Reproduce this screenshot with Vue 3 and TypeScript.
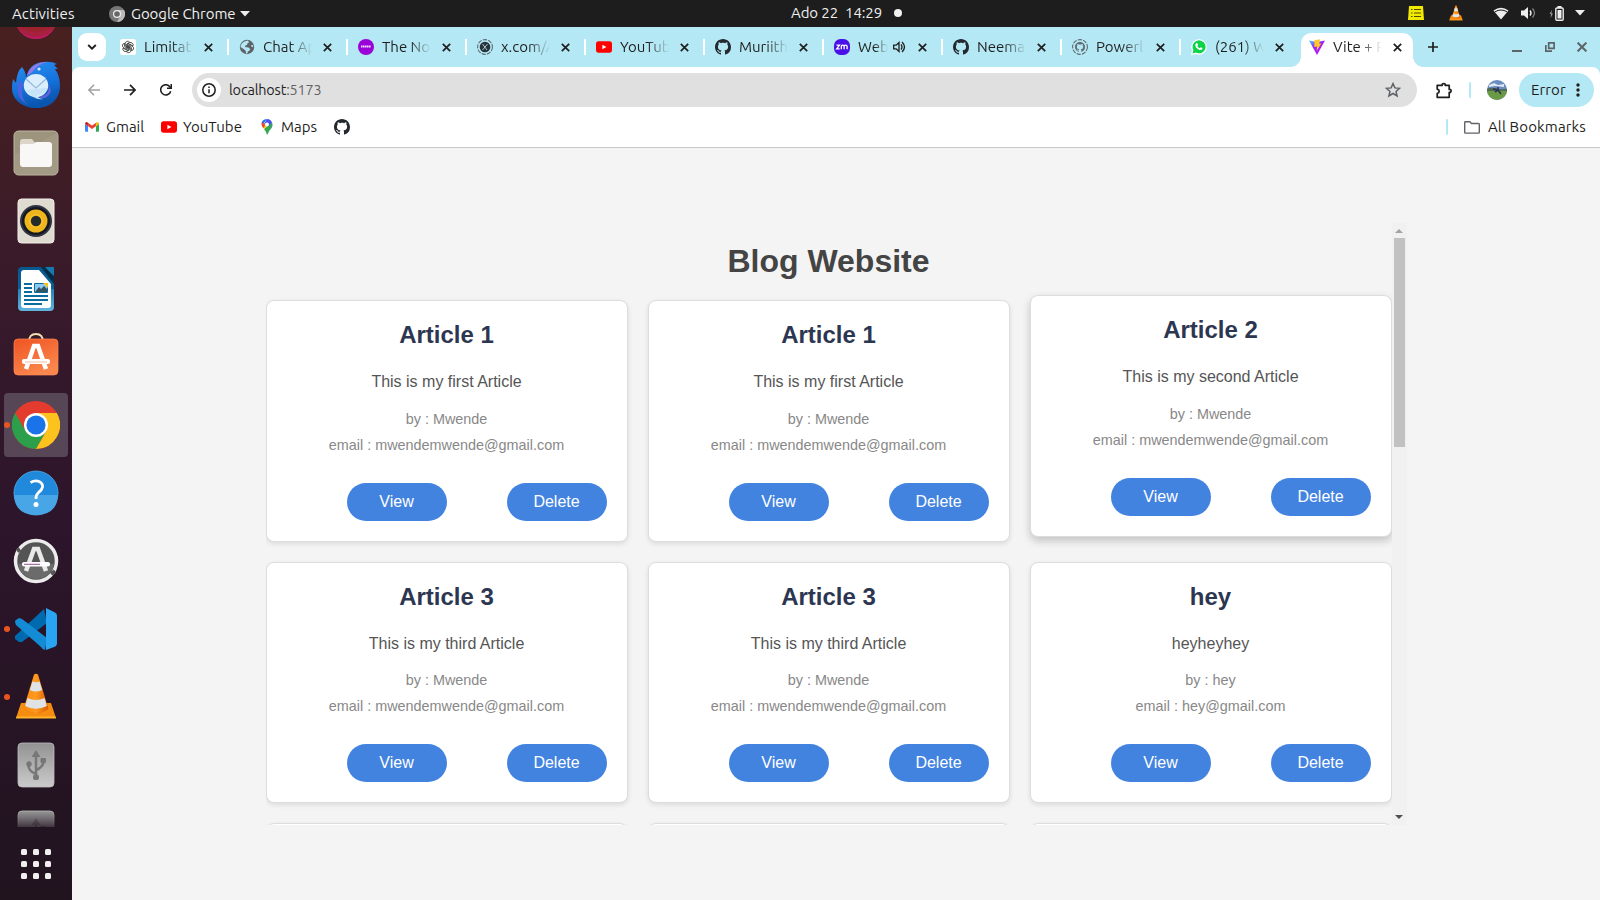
<script setup lang="ts">
interface Tab { title: string; icon: string; audio?: boolean }
interface Article { title: string; content: string; author: string; email: string; hovered?: boolean }
interface DockItem { icon: string; running?: boolean; active?: boolean; fading?: boolean }

const github = '<path fill="#24292f" d="M8 0C3.58 0 0 3.58 0 8c0 3.54 2.29 6.53 5.47 7.59.4.07.55-.17.55-.38 0-.19-.01-.82-.01-1.49-2.01.37-2.53-.49-2.69-.94-.09-.23-.48-.94-.82-1.13-.28-.15-.68-.52-.01-.53.63-.01 1.08.58 1.23.82.72 1.21 1.87.87 2.33.66.07-.52.28-.87.51-1.07-1.78-.2-3.64-.89-3.64-3.95 0-.87.31-1.59.82-2.15-.08-.2-.36-1.02.08-2.12 0 0 .67-.21 2.2.82.64-.18 1.32-.27 2-.27s1.36.09 2 .27c1.53-1.04 2.2-.82 2.2-.82.44 1.1.16 1.92.08 2.12.51.56.82 1.27.82 2.15 0 3.07-1.87 3.75-3.65 3.95.29.25.54.73.54 1.48 0 1.07-.01 1.93-.01 2.2 0 .21.15.46.55.38A8.01 8.01 0 0 0 16 8c0-4.42-3.58-8-8-8z"/>'
const petal = 'M8 8.3 5.2 6.7V4.6a2.4 2.4 0 0 1 4.4-1.3L6.6 5v3'
const petals = [0, 60, 120, 180, 240, 300].map(a => `<path d="${petal}" transform="rotate(${a} 8 8)"/>`).join('')
const dashedRing = '<circle cx="8" cy="8" r="7.4" fill="none" stroke="#5f6b70" stroke-width="1.1" stroke-dasharray="4.2 1.2"/>'

const small: Record<string, string> = {
  github,
  chatgpt: `<rect width="16" height="16" rx="2.5" fill="#fff"/><g fill="none" stroke="#333" stroke-width=".8">${petals}</g>`,
  globe: '<circle cx="8" cy="8" r="7.2" fill="#5f6368"/><path fill="#b4e8f4" d="M6 2.2 9 1.5l1 1.7-1.8 1.5-.2 1.4-1.6.5-.4 1.5 3.5.3 1.8 1.8-1 1.6-1.6.6-.2 2H7l-.3-2.7-1.8-1.5L1.5 8c.1-2.7 2-4.900 4.500-5.800zM12 6l2 .2.200 2-1.600-.5z"/>',
  nopurple: '<circle cx="8" cy="8" r="8" fill="#9a00d8"/><path d="M3 7.500h10" stroke="#f1d9fb" stroke-width="2" stroke-dasharray="1.600 .4"/>',
  xcom: `${dashedRing}<circle cx="8" cy="8" r="5.300" fill="#24343c"/><path d="M5.500 5l4.500 6M10.500 5 5.500 11" stroke="#dce9ed" stroke-width=".8" fill="none"/>`,
  youtube: '<rect y="2.300" width="16" height="11.400" rx="2.600" fill="#f00"/><path d="M6.400 5.700v4.600L10.400 8z" fill="#fff"/>',
  zoom: '<rect width="16" height="16" rx="6.500" fill="#4a10e8"/><g fill="none" stroke="#fff" stroke-width="1.300"><path d="M2.500 6.200h3L2.700 9.800h3M7.300 10.300V7.600q0-1.500 1.400-1.500t1.400 1.500v2.700V7.600q0-1.500 1.500-1.500t1.500 1.500v2.700"/></g>',
  powerl: `${dashedRing}<g transform="translate(3 3) scale(.625)">${github.replace('#24292f', '#5f6b70')}</g>`,
  whatsapp: '<path fill="#fff" d="M0 16 1 11A7.700 7.700 0 1 1 5 15z"/><path fill="#0bd449" d="m1.500 14.500.9-3.500a6.500 6.500 0 1 1 2.500 2.500z"/><path fill="#fff" d="M5.200 4.300q1-.6 1.400.4l.5 1.200-.8 1q.8 1.600 2.500 2.300l1-1 1.800.9q0 1.800-2 2C7 11 4 8.200 4.300 5.700z"/>',
  vite: '<defs><linearGradient id="vp" x1="0" y1="0" x2=".7" y2="1"><stop stop-color="#41d1ff"/><stop offset=".45" stop-color="#9b20ff"/><stop offset="1" stop-color="#bd13ff"/></linearGradient></defs><path fill="url(#vp)" d="M0 1.500 8 3l8-1.500L8 16z"/><path fill="#ffcb1f" d="m5.500 1.300 5.500-1-.7 4.500 2-.4L7.600 12l.5-4.500-2.800.6z"/>',
  gmail: '<path fill="#4285f4" d="M1 13.500h2.500V7L0 4.400v8q0 1.100 1 1.100z"/><path fill="#34a853" d="M12.500 13.500H15q1 0 1-1.100v-8L12.500 7z"/><path fill="#ea4335" d="M3.500 7V3l4.500 3.400L12.500 3v4L8 10.400z"/><path fill="#c5221f" d="M0 4.400Q0 2 2 2.200L3.500 3v4z"/><path fill="#fbbc04" d="M12.500 7V3L14 2.200q2-.2 2 2.200z"/>',
  maps: '<path fill="#34a853" d="M8 16q-.8-3.500-3-6L13 3.500c2 4.500-2 6.500-3.500 10z"/><path fill="#fbbc04" d="M5 10 3 7l3-3.500 4 2z"/><path fill="#1a73e8" d="M2.600 3.500Q4 0 8 0L4.300 4.700z"/><path fill="#4b50f0" d="M8 0q3.800.2 5 3.500L9 8l-1-3.500L5 5z"/><path fill="#ea4335" d="M3 7q-1-1.800-.2-4L6.300 5.800 4.300 9z"/><circle cx="8" cy="5.500" r="2" fill="#fff"/>',
}

const chromeWheel = '<circle cx="24" cy="24" r="24" fill="#e33b2e"/><path fill="#2c9f4a" d="M3.200 12A24 24 0 0 0 24 48l10.400-18-10.400 6-10.400-6z"/><path fill="#fcc31e" d="M24 48A24 24 0 0 0 44.800 12H24l10.400 18z"/><circle cx="24" cy="24" r="12" fill="#fff"/><circle cx="24" cy="24" r="9.600" fill="#1a73e8"/>'
const usb = '<defs><linearGradient id="us" x2="0" y2="1"><stop stop-color="#929292"/><stop offset="1" stop-color="#cbcbcb"/></linearGradient></defs><rect x="6" y="2" width="36" height="44" rx="4" fill="url(#us)" stroke="#bdbdbd" stroke-width=".8"/><g stroke="#777" stroke-width="2.500" fill="none"><path d="M24 15v22M24 33q-8-3-7.500-9.500M24 29q8-3 7.500-10"/></g><path d="m24 9-4.500 7h9z" fill="#777"/><circle cx="17" cy="23" r="2.700" fill="#777"/><rect x="28.500" y="17" width="5.500" height="5" rx="1" fill="#777"/><rect x="21" y="33.500" width="6" height="5.500" rx="2" fill="#777"/>'
const cone = '<defs><linearGradient id="co"><stop stop-color="#f98a12"/><stop offset=".5" stop-color="#ff9a20"/><stop offset="1" stop-color="#d75c00"/></linearGradient></defs><path fill="#f78d10" d="M9 30h30l5 15H4z"/><path fill="#ffb62c" d="M4.500 43.500h39l.5 2H4z"/><path fill="#c75704" d="M12 36q12 8 24 0l-1-5H13z"/><path fill="url(#co)" d="M22 1.500q2-1.500 4 0L36.500 36q-12.500 8-25 0z"/><path fill="#dfe3e5" d="M20.500 8.500q3.500 1.500 7 0l2.700 8.500q-6.200 3-12.400 0zM15.500 25q8.500 4 17 0l2.400 8q-10.900 5.500-21.800 0z"/>'

const large: Record<string, string> = {
  terminalEdge: '<circle cx="24" cy="23" r="22" fill="#9c2230"/><path d="M4 32q20 14 40 0-6 14-20 14T4 32z" fill="#a82040"/><path d="M6 36q18 16 36 0-7 10-18 10T6 36z" fill="#bb1a63"/>',
  thunderbird: '<defs><linearGradient id="tb" x2=".3" y2="1"><stop stop-color="#2a91f1"/><stop offset=".6" stop-color="#1672dc"/><stop offset="1" stop-color="#0953a9"/></linearGradient></defs><path fill="url(#tb)" d="M1 18 4 22Q5 10 10 6q4 5 4 11Q17 2 31 1q9-1 14 2l-3 1 4 4h-3q5 7 5 17c0 13-11 22-24 22S0 39 0 27q0-5 1-9z"/><path fill="#9878e8" d="M15 14Q20 1 36 1 26 3 21 10q-2 3-6 4z"/><path fill="#4f62dd" d="M7 20q-5 17 9 24-9-8-5-22z"/><path fill="#5f63dc" d="M35 22q6 11-8 14 5 3 9-1 6-5-1-13z"/><path fill="#0b5dbd" d="M4 36q19 13 44-10-1 21-24 21Q10 47 4 36z" opacity=".35"/><ellipse cx="24" cy="24.500" rx="12.200" ry="11.500" fill="#dbeefc"/><path fill="#c7e3f9" d="M14 29q9 11 17 9-6-1-6-4 8 0 10-7z"/><path d="m14 18 10 9 10-9" fill="none" stroke="#96b9dc" stroke-width="1.300"/><circle cx="27" cy="8" r="1.600" fill="#cfe7fc"/>',
  files: '<rect x="2" y="2" width="44" height="44" rx="4.500" fill="#9d947e" stroke="#beb7a5" stroke-width="1"/><path d="M3 26 45 4v38q0 3-3 3H6q-3 0-3-3z" fill="#a79f8b" opacity=".6"/><path fill="#ddd6c8" d="M8 13q0-3 3-3h9l3 4v5H8z"/><path fill="#f9f8f6" d="M8 17q0-2 3-2h10l3-2h13q3 0 3 3v19q0 3-3 3H11q-3 0-3-3z"/>',
  speaker: '<rect x="6" y="2" width="36" height="44" rx="3.500" fill="#dfdbd0" stroke="#f2eee6"/><circle cx="24" cy="24" r="16" fill="#303543"/><circle cx="24" cy="24" r="14" fill="#15191f"/><circle cx="24" cy="24" r="11.500" fill="#eeb51d"/><circle cx="24" cy="24" r="7" fill="#ffc82d" opacity=".6"/><circle cx="24" cy="24" r="5.200" fill="#252a2d"/>',
  writer: '<defs><linearGradient id="wr" x2="0" y2="1"><stop stop-color="#07588e"/><stop offset=".49" stop-color="#086295"/><stop offset=".5" stop-color="#2084b8"/><stop offset="1" stop-color="#62b4dd"/></linearGradient></defs><path fill="url(#wr)" d="M10 2h20l12 11v29q0 4-4 4H10q-4 0-4-4V6q0-4 4-4z"/><path fill="#fff" d="M12 5h15l12 14v21q0 3-3 3H12q-3 0-3-3V8q0-3 3-3z"/><path fill="#1679ae" d="M32 2h10v9z"/><path fill="#002d48" d="M29 2h4l9 10v7z"/><path stroke="#0a6b9f" stroke-width="2" d="M12 19h8M12 23h8M12 27h8M12 31h24M12 35h24M12 39h18"/><path fill="#8bcaf5" stroke="#0a6b9f" d="M22.500 18.500h13v9h-13z"/><path fill="#36515f" d="m23 27 4-5 2 2 3-3 3 3v3z"/><path fill="#f0c21b" d="m31 18 5 5v-5z"/>',
  software: '<defs><linearGradient id="sw" x2=".5" y2="1"><stop stop-color="#ee5322"/><stop offset="1" stop-color="#fa874d"/></linearGradient></defs><path d="M17 9q0-8 7-8t7 8" fill="none" stroke="#efe0b4" stroke-width="1.800"/><rect x="2" y="6" width="44" height="36" rx="4" fill="url(#sw)" stroke="#ff8a57" stroke-width=".7"/><path d="m14 36 8-23h4l8 23" fill="none" stroke="#fff" stroke-width="4.500"/><rect x="10" y="26" width="28" height="5" rx="2" fill="#fff"/><path d="M13 29h22" stroke="#f2a178" stroke-width=".7"/>',
  chrome: chromeWheel,
  help: '<circle cx="24" cy="24" r="22" fill="#2089dc" stroke="#54b0eb" stroke-width=".8"/><path fill="#48a6e6" d="M2 26h44q-1 20-22 20T2 26z"/><path d="M18.500 13.500Q23 11 27 12.500q4 2 3.500 5.500-.5 3-4 5.500-2.500 2-2.500 6.500" fill="none" stroke="#fff" stroke-width="2.800"/><circle cx="24" cy="35.500" r="2.500" fill="#fff"/>',
  updater: '<circle cx="24" cy="24" r="20.500" fill="#545454" stroke="#ececec" stroke-width="3.500"/><path fill="#6b6b6b" d="M6 27h36q-3 15-18 15T6 27z"/><path d="m5 14 3-2M39 37l4-3" stroke="#555" stroke-width="4"/><path d="m14 34 8-22h4l8 22" fill="none" stroke="#e9e9e9" stroke-width="4.500"/><rect x="10" y="25" width="28" height="4.500" rx="2" fill="#fff"/><path d="M12 27.300h16" stroke="#954e93" stroke-width="1"/>',
  vscode: '<path fill="#006aae" d="m32 4-29 27v3l4 3h3L35 18z"/><path fill="#138bd5" d="M3 17q0-2 1-2l3-2 3 1 25 19-2 12q-2 0-4-3L4 20z"/><path fill="#28a4f2" d="m34 3 8 4q3 1 3 4v27q0 3-3 4l-8 3z"/>',
  vlc: cone,
  usb,
}

const tabs: Tab[] = [
  { title: 'Limitat', icon: 'chatgpt' }, { title: 'Chat Ap', icon: 'globe' }, { title: 'The No', icon: 'nopurple' },
  { title: 'x.com/A', icon: 'xcom' }, { title: 'YouTub', icon: 'youtube' }, { title: 'Muriith', icon: 'github' },
  { title: 'Web', icon: 'zoom', audio: true }, { title: 'Neema', icon: 'github' }, { title: 'Powerl', icon: 'powerl' },
  { title: '(261) W', icon: 'whatsapp' },
]
const dock: DockItem[] = [
  { icon: 'terminalEdge' }, { icon: 'thunderbird' }, { icon: 'files' }, { icon: 'speaker' }, { icon: 'writer' }, { icon: 'software' },
  { icon: 'chrome', running: true, active: true }, { icon: 'help' }, { icon: 'updater' }, { icon: 'vscode', running: true },
  { icon: 'vlc', running: true }, { icon: 'usb' }, { icon: 'usb', fading: true },
]
const mwende = { author: 'Mwende', email: 'mwendemwende@gmail.com' }
const first = { title: 'Article 1', content: 'This is my first Article', ...mwende }
const third = { title: 'Article 3', content: 'This is my third Article', ...mwende }
const articles: Article[] = [
  first, first, { title: 'Article 2', content: 'This is my second Article', ...mwende, hovered: true },
  third, third, { title: 'hey', content: 'heyheyhey', author: 'hey', email: 'hey@gmail.com' },
]
</script>

<template>
  <div class="desktop">
    <header class="topbar">
      <div class="top-left">
        <span class="activities">Activities</span>
        <svg class="app-icon" viewBox="0 0 16 16"><circle cx="8" cy="8" r="8" fill="#777" /><path d="M8 8V4h7a8 8 0 0 1-7 12l3.400-6z" fill="#b9b9b9" /><circle cx="8" cy="8" r="4" fill="#eee" /><circle cx="8" cy="8" r="2.800" fill="#666" /></svg>
        <span class="app-name">Google Chrome</span>
        <svg class="caret" viewBox="0 0 10 6"><path d="M0 0h10L5 5.500z" fill="#eee" /></svg>
      </div>
      <div class="clock"><span>Ado 22</span><span>14:29</span><i></i></div>
      <div class="tray">
        <svg width="16" height="14" viewBox="0 0 16 14"><path d="M1 0h14l1 14H0z" fill="#f2e900" /><path d="M3 3.500h1.500M6 3.500h7M3 7h1.500M6 7h7M3 10.500h1.500M6 10.500h7" stroke="#4d4a00" stroke-width="1.200" /></svg>
        <svg class="tray-cone" viewBox="3 0 42 47" v-html="large.vlc"></svg>
        <svg class="wifi" width="16" height="13" viewBox="0 0 16 13"><path d="M.5 3.500q7.500-5.500 15 0L8 12.500z" fill="#eee" /><path d="M2 4.800q6-3.600 12 0" stroke="#1d1d1d" stroke-width="1" fill="none" /></svg>
        <svg class="volume" width="15" height="12" viewBox="0 0 15 12"><path d="M0 3.500h3L7 0v12L3 8.500H0z" fill="#eee" /><path d="M9 3.500q2 2.500 0 5" stroke="#eee" stroke-width="1.400" fill="none" /><path d="M11.500 1.500q4 4.500 0 9" stroke="#888" stroke-width="1.200" fill="none" /></svg>
        <svg class="battery" width="15" height="15" viewBox="0 0 15 15"><path d="m3 4-2.500 4H2l-.5 4L4 7.500H2.500z" fill="#999" /><path d="M8.500 0h4v2h-4z" fill="#eee" /><rect x="6.800" y="2" width="7.400" height="12.200" rx="1" fill="none" stroke="#eee" stroke-width="1.400" /><path d="M8.500 4h4v8.500h-4z" fill="#eee" /></svg>
        <svg class="caret end" viewBox="0 0 10 6"><path d="M0 0h10L5 5.500z" fill="#eee" /></svg>
      </div>
    </header>

    <div class="workspace">
      <aside class="dock">
        <div class="dock-list">
          <div v-for="(item, i) in dock" :key="i" class="dock-item" :class="{ active: item.active, running: item.running, fading: item.fading }">
            <svg viewBox="0 0 48 48" v-html="large[item.icon]"></svg>
          </div>
        </div>
        <div class="apps-grid"><i v-for="n in 9" :key="n"></i></div>
      </aside>

      <main class="browser">
        <nav class="tabstrip">
          <div class="tab-search"><svg width="10" height="6" viewBox="0 0 10 6"><path d="m1.200 1 3.800 3.600L8.800 1" fill="none" stroke="#1f1f1f" stroke-width="1.900" /></svg></div>
          <div v-for="(tab, i) in tabs" :key="i" class="tab" :class="{ separated: i < tabs.length - 1 }">
            <svg class="favicon" viewBox="0 0 16 16" v-html="small[tab.icon]"></svg>
            <span class="tab-title" :class="{ short: tab.audio }">{{ tab.title }}</span>
            <svg v-if="tab.audio" class="audio" viewBox="0 0 13 12"><path d="M.7 4.200h2.500L6 1.500v9L3.200 7.800H.7z" fill="none" stroke="#1f1f1f" stroke-width="1.300" /><path d="M8 3.500q2 2.500 0 5M9 1q5 5 0 10" fill="none" stroke="#1f1f1f" stroke-width="1.300" /></svg>
            <svg class="close" viewBox="0 0 9 9"><path d="m.8.8 7.400 7.400M8.200.8.8 8.200" stroke="#1f1f1f" stroke-width="1.700" /></svg>
          </div>
          <div class="tab current">
            <svg class="favicon" viewBox="0 0 16 16" v-html="small.vite"></svg>
            <span class="tab-title">Vite + R</span>
            <svg class="close" viewBox="0 0 9 9"><path d="m.8.8 7.400 7.400M8.200.8.8 8.200" stroke="#1f1f1f" stroke-width="1.700" /></svg>
          </div>
          <svg class="new-tab" viewBox="0 0 10 10"><path d="M5 0v10M0 5h10" stroke="#1f1f1f" stroke-width="1.700" /></svg>
          <div class="window-buttons">
            <svg width="10" height="10" viewBox="0 0 10 10"><path d="M0 9h10" stroke="#5c6468" stroke-width="2" /></svg>
            <svg width="10" height="10" viewBox="0 0 10 10"><path d="M3.700.9h5.400v5.400H3.700zM.8 3v6.200H7" fill="none" stroke="#5c6468" stroke-width="1.700" /></svg>
            <svg width="10" height="10" viewBox="0 0 10 10"><path d="m.6.6 8.800 8.800M9.400.6.6 9.400" stroke="#5c6468" stroke-width="2" /></svg>
          </div>
        </nav>

        <section class="chrome-bars">
          <div class="toolbar">
            <div class="nav-buttons">
              <svg viewBox="0 0 12 12"><path d="M12 6H1M6 .8.9 6 6 11.200" fill="none" stroke="#a3a3a3" stroke-width="1.600" /></svg>
              <svg viewBox="0 0 12 12"><path d="M0 6h11M6 .8 11.100 6 6 11.200" fill="none" stroke="#1f1f1f" stroke-width="1.700" /></svg>
              <svg viewBox="0 0 12 12"><path d="M10.700 7.200A5.100 5.100 0 1 1 9.800 2.700L11 4" fill="none" stroke="#1f1f1f" stroke-width="1.600" /><path d="M12 0v5H7V3.600h3.500V0z" fill="#1f1f1f" /></svg>
            </div>
            <div class="address">
              <span class="site-info"><svg width="14" height="14" viewBox="0 0 14 14"><circle cx="7" cy="7" r="6.200" fill="none" stroke="#1f1f1f" stroke-width="1.500" /><path d="M7 6.200v4M7 3.500V5" stroke="#1f1f1f" stroke-width="1.500" /></svg></span>
              <span class="url">localhost<em>:5173</em></span>
              <svg class="star" viewBox="0 0 16 16"><path d="m8 1.600 1.900 4.300 4.700.4-3.600 3.100 1.100 4.600L8 11.500 3.900 14 5 9.400 1.400 6.300l4.700-.4z" fill="none" stroke="#5f6368" stroke-width="1.500" /></svg>
            </div>
            <svg class="puzzle" viewBox="0 0 17 17"><path d="M1.200 3.300h5V2.200q1.500-1.300 3 0v1.100h4v4.200h1.200q1.500 1.300 0 2.800h-1.200v5h-12v-3.800q2-.5 2-2.200t-2-2.200z" fill="none" stroke="#1f1f1f" stroke-width="1.700" stroke-linejoin="round" /></svg>
            <i class="divider tool-divider"></i>
            <svg class="avatar" viewBox="0 0 20 20"><defs><clipPath id="av"><circle cx="10" cy="10" r="10" /></clipPath></defs><g clip-path="url(#av)"><path fill="#6a8cc0" d="M0 0h20v20H0z" /><path fill="#dfe8f2" d="m2 5 5-2 4 2 6-1v3L8 6 2 7z" /><path fill="#4d6b55" d="M0 8.500q5-1.500 10 0t10 0V12H0z" /><path fill="#6b9a45" d="M0 11h20v9H0z" /><path stroke="#2c3354" stroke-width="1.600" fill="none" d="m6 9 5 1 3 4M11 7v3l-3 2" /></g></svg>
            <div class="error-pill"><span>Error</span><svg width="4" height="14" viewBox="0 0 4 14"><g fill="#1f1f1f"><circle cx="2" cy="2" r="1.700" /><circle cx="2" cy="7" r="1.700" /><circle cx="2" cy="12" r="1.700" /></g></svg></div>
          </div>
          <div class="bookmarks">
            <svg class="bm-gmail" viewBox="0 0 16 16" v-html="small.gmail"></svg><span class="bm-label gmail">Gmail</span>
            <svg class="bm-icon" viewBox="0 0 16 16" v-html="small.youtube"></svg><span class="bm-label youtube">YouTube</span>
            <svg class="bm-icon" viewBox="0 0 16 16" v-html="small.maps"></svg><span class="bm-label maps">Maps</span>
            <svg class="bm-icon" viewBox="0 0 16 16" v-html="small.github"></svg>
            <div class="all-bookmarks">
              <i class="divider"></i>
              <svg width="16" height="13" viewBox="0 0 16 13"><path d="M1.500.8h4.300l1.700 1.700h7q.8 0 .8.800v8q0 .8-.8.800h-13q-.8 0-.8-.8V1.500q0-.7.8-.7z" fill="none" stroke="#5f6368" stroke-width="1.400" /></svg>
              <span>All Bookmarks</span>
            </div>
          </div>
        </section>

        <section class="page">
          <div class="blog">
            <div class="blog-content">
              <h1>Blog Website</h1>
              <div class="cards">
                <article v-for="(a, i) in articles" :key="i" class="card" :class="{ hovered: a.hovered }">
                  <h2>{{ a.title }}</h2>
                  <p class="body">{{ a.content }}</p>
                  <p class="meta">by : {{ a.author }}</p>
                  <p class="meta">email : {{ a.email }}</p>
                  <div class="actions"><button>View</button><button>Delete</button></div>
                </article>
                <article v-for="n in 3" :key="`next-${n}`" class="card"></article>
              </div>
            </div>
            <div class="scrollbar">
              <svg viewBox="0 0 8 4"><path d="M0 4h8L4 0z" fill="#a3a3a3" /></svg>
              <div class="thumb"></div>
              <svg class="down" viewBox="0 0 8 4"><path d="M0 0h8L4 4z" fill="#505050" /></svg>
            </div>
          </div>
        </section>
      </main>
    </div>
  </div>
</template>

<style>
body { overflow: hidden; }
</style>

<style scoped>
* { box-sizing: border-box; }
svg { display: block; flex: none; }
.desktop { width: 1600px; height: 900px; display: flex; flex-direction: column; overflow: hidden; font: 15px/20px Ubuntu, "Noto Sans", sans-serif; color: #1f1f1f; }
.topbar { height: 27px; flex: none; background: #1d1d1d; color: #f0f0f0; display: grid; grid-template-columns: 791px auto 1fr; align-items: center; }
.top-left { display: flex; align-items: center; padding-left: 12px; }
.activities { width: 97px; letter-spacing: .1px; }
.app-icon { width: 16px; height: 16px; margin-right: 6px; }
.app-name { width: 109px; white-space: nowrap; letter-spacing: -.05px; }
.caret { width: 10px; height: 6px; }
.clock { display: flex; gap: 7px; align-items: center; padding-bottom: 1px; letter-spacing: -.1px; }
.clock i { width: 8px; height: 8px; border-radius: 50%; background: #f2f2f2; margin-left: 5px; }
.tray { display: flex; align-items: center; justify-content: flex-end; padding: 0 15px 1px 0; }
.tray-cone { width: 14px; height: 16px; margin-left: 25px; }
.wifi { margin-left: 30px; }
.volume { margin-left: 12px; }
.battery { margin-left: 13px; }
.caret.end { margin-left: 11px; }

.workspace { flex: 1; display: flex; min-height: 0; }
.dock { width: 72px; flex: none; background: linear-gradient(180deg, #48201f 0%, #3a1b2a 26%, #2d152b 55%, #21141f 100%); display: flex; flex-direction: column; }
.dock-list { height: 803px; overflow: hidden; }
.dock-item { height: 68px; display: flex; align-items: center; padding-left: 4px; }
.dock-item:first-child { margin-top: -44px; }
.dock-item::before { content: ""; width: 6px; height: 6px; border-radius: 50%; flex: none; }
.dock-item.running::before { background: #e95420; }
.dock-item svg { width: 48px; height: 48px; margin-left: 2px; }
.dock-item.active { height: 64px; width: 64px; margin: 2px 4px; padding-left: 0; background: #574655; border-radius: 4px; }
.dock-item.fading { -webkit-mask-image: linear-gradient(#000 18%, transparent 48%); mask-image: linear-gradient(#000 18%, transparent 48%); }
.apps-grid { display: grid; grid-template-columns: repeat(3, 6px); gap: 6px; padding: 21px; }
.apps-grid i { width: 6px; height: 6px; border-radius: 1.5px; background: #f1efef; }
.apps-grid { padding-top: 22px; }

.browser { flex: 1; min-width: 0; display: flex; flex-direction: column; background: #f4f4f4; }
.tabstrip { height: 40px; flex: none; background: #b4e8f4; display: flex; align-items: center; padding-left: 6px; }
.tab-search { width: 28px; height: 28px; border-radius: 9px; background: #fff; display: flex; align-items: center; justify-content: center; margin-right: 4px; }
.tab { width: 119px; height: 34px; flex: none; display: flex; align-items: center; padding-left: 10px; position: relative; }
.tab.separated::after { content: ""; width: 2px; height: 16px; background: #fff; margin-left: auto; }
.favicon { width: 16px; height: 16px; }
.tab-title { width: 49px; margin: 0 11px 0 8px; white-space: nowrap; overflow: hidden; flex: none; -webkit-mask-image: linear-gradient(90deg, #000 55%, transparent); mask-image: linear-gradient(90deg, #000 55%, transparent); }
.tab-title.short { width: 30px; margin-right: 5px; }
.audio { width: 13px; height: 12px; margin-right: 12px; }
.close { width: 9px; height: 9px; }
.tab.current { width: 112px; margin-left: 1px; padding-left: 8px; background: #fff; border-radius: 10px 10px 0 0; align-self: flex-end; padding-bottom: 6px; }
.tab.current::before, .tab.current::after { content: ""; position: absolute; bottom: 0; width: 10px; height: 10px; }
.tab.current::before { left: -10px; background: radial-gradient(circle at 0 0, transparent 9.5px, #fff 10px); }
.tab.current::after { right: -10px; background: radial-gradient(circle at 100% 0, transparent 9.5px, #fff 10px); }
.new-tab { width: 10px; height: 10px; margin-left: 15px; }
.window-buttons { display: flex; gap: 22.5px; margin-left: auto; padding-right: 13px; }
.chrome-bars { height: 81px; flex: none; background: linear-gradient(#b4e8f4 8px, #fff 8px); border-bottom: 1px solid #cacaca; }
.toolbar { height: 46px; background: #fff; border-radius: 8px 8px 0 0; display: flex; align-items: center; }
.nav-buttons { display: flex; gap: 24px; padding-left: 16px; width: 120px; }
.nav-buttons svg { width: 12px; height: 12px; }
.address { width: 1225px; height: 34px; border-radius: 17px; background: #e0e0e0; display: flex; align-items: center; padding-left: 5px; }
.site-info { width: 24px; height: 24px; border-radius: 50%; background: #fff; display: flex; align-items: center; justify-content: center; }
.url { margin-left: 8px; font-size: 14.4px; letter-spacing: -.15px; }
.url em { font-style: normal; color: #636363; }
.star { width: 16px; height: 16px; margin: 0 16px 0 auto; }
.puzzle { width: 17px; height: 17px; margin-left: 19px; }
.divider { width: 2px; height: 16px; background: #b4e8f4; border-radius: 1px; flex: none; }
.tool-divider { margin: 0 16px; }
.avatar { width: 20px; height: 20px; margin-right: 12px; }
.error-pill { width: 75px; height: 34px; border-radius: 17px; background: #b4e8f4; display: flex; align-items: center; justify-content: space-between; padding: 0 14px 0 12px; letter-spacing: .1px; }
.bookmarks { height: 28px; display: flex; align-items: center; padding-left: 13px; }
.bm-gmail { width: 14px; height: 14px; margin-right: 7px; }
.bm-icon { width: 16px; height: 16px; }
.bm-label { white-space: nowrap; }
.gmail { width: 55px; }
.youtube { width: 76px; padding-left: 6px; margin-right: 6px; }
.maps { width: 59px; padding-left: 6px; }
.all-bookmarks { margin-left: auto; display: flex; align-items: center; padding-right: 14px; letter-spacing: .15px; }
.all-bookmarks svg { margin: 0 8px 0 16px; }

.page { flex: 1; display: flex; justify-content: center; padding-top: 75px; font-family: "Liberation Sans", Arial, sans-serif; }
.blog { width: 1141px; height: 602px; display: flex; overflow: hidden; }
.blog-content { width: 1126px; overflow: hidden; }
h1 { margin: 20px 0 20.4px; height: 37px; line-height: 37px; font-size: 32px; text-align: center; color: #444; }
.cards { display: grid; grid-template-columns: repeat(3, 362px); grid-auto-rows: 241.2px; gap: 20px; }
.card { background: #fff; border: 1px solid #ddd; border-radius: 8px; padding: 20px; box-shadow: 0 2px 5px rgba(0, 0, 0, .1); text-align: center; }
.card.hovered { transform: translateY(-5px); box-shadow: 0 4px 8px rgba(0, 0, 0, .2); }
h2 { font-size: 24px; line-height: 27px; margin: 0 0 21px; color: #2c3650; }
p { margin: 0; }
.body { font-size: 16px; line-height: 26px; color: #555; margin-bottom: 10.8px; }
.meta { font-size: 14.4px; line-height: 26px; color: #888; }
.actions { display: flex; justify-content: flex-end; gap: 60px; margin-top: 24.5px; }
button { width: 100px; height: 38px; border: 0; border-radius: 20px; background: #4283e0; color: #fff; font: 16px "Liberation Sans", Arial, sans-serif; }
.scrollbar { width: 15px; background: #f1f1f1; display: flex; flex-direction: column; align-items: center; padding: 6px 0; }
.scrollbar svg { width: 8px; height: 4px; }
.thumb { width: 11px; height: 209px; margin-top: 5px; background: #c1c1c1; }
.down { margin-top: auto; }
</style>
